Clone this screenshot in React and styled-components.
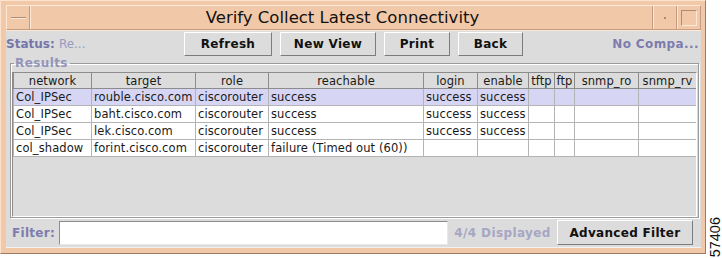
import React from "react";
import styled, { createGlobalStyle } from "styled-components";

const Global = createGlobalStyle`
  html, body { margin: 0; padding: 0; background: #ffffff; }
  body { font-family: "DejaVu Sans", sans-serif; }
`;

const UI = `"DejaVu Sans", "Liberation Sans", sans-serif`;

const Page = styled.div`
  display: flex;
  width: 722px;
  height: 258px;
`;

const Window = styled.div`
  box-sizing: border-box;
  width: 706px;
  height: 254px;
  background: #f2c9a8;
  border-right: 1px solid #9e7a64;
  border-bottom: 1px solid #9e7a64;
  border-left: 1px solid #fbe2cf;
  border-top: 1px solid #fbe2cf;
  padding: 4px 4px 5px 5px;
  display: flex;
  flex-direction: column;
`;

const TitleBar = styled.div`
  display: flex;
  height: 25px;
  box-sizing: border-box;
  border-top: 1px solid #fde8d8;
  border-bottom: 1px solid #c49c84;
  border-left: 1px solid #fde8d8;
  border-right: 1px solid #c49c84;
`;

const TitleCell = styled.div`
  display: flex;
  align-items: center;
  justify-content: center;
  width: ${(p) => p.$w}px;
  border-right: 1px solid ${(p) => (p.$last ? "transparent" : "#c49c84")};
  border-left: 1px solid ${(p) => (p.$first ? "transparent" : "#fde8d8")};
  box-sizing: border-box;
`;

const Title = styled.div`
  flex: 1;
  display: flex;
  align-items: center;
  justify-content: center;
  font-family: ${UI};
  font-size: 16.5px;
  color: #111;
  border-left: 1px solid #fde8d8;
  border-right: 1px solid #c49c84;
  padding-left: 2px;
`;

const Dash = styled.div`
  width: 15px;
  height: 1px;
  background: #b08c76;
  border-bottom: 1px solid #fde8d8;
`;

const Dot = styled.div`
  width: 2px;
  height: 2px;
  background: #b08c76;
`;

const MaxBox = styled.div`
  width: 14px;
  height: 14px;
  border: 1px solid;
  border-color: #b08c76 #fde8d8 #fde8d8 #b08c76;
`;

const Content = styled.div`
  flex: 1;
  background: #dcdcdc;
  display: flex;
  flex-direction: column;
  border-top: 1px solid #fde8d8;
`;

const Toolbar = styled.div`
  display: flex;
  align-items: center;
  height: 25px;
`;

const Status = styled.div`
  width: 178px;
  font-family: ${UI};
  font-size: 12px;
  font-weight: bold;
  color: #7676aa;
  white-space: nowrap;
`;

const Faint = styled.span`
  font-weight: normal;
  color: #9a9ac0;
`;

const Buttons = styled.div`
  display: flex;
  gap: 8px;
`;

const Button = styled.button`
  box-sizing: border-box;
  width: ${(p) => p.$w}px;
  height: ${(p) => p.$h || 24}px;
  background: #dcdcdc;
  border: 1px solid;
  border-color: #ffffff #7c7c7c #7c7c7c #ffffff;
  font-family: ${UI};
  font-size: 12px;
  font-weight: bold;
  color: #111;
  padding: 0;
  letter-spacing: 0.3px;
`;

const RightLabel = styled.div`
  margin-left: auto;
  padding-right: 2px;
  font-family: ${UI};
  font-size: 12px;
  font-weight: bold;
  color: #7c7cae;
  letter-spacing: 0.4px;
`;

const Group = styled.fieldset`
  margin: 1px 2px 0 4px;
  padding: 2px 1px 0 1px;
  border: 1px solid #9a9a9a;
  box-shadow: inset 1px 1px 0 #ffffff, 1px 1px 0 #ffffff;
  min-width: 0;
`;

const Legend = styled.legend`
  margin-left: 2px;
  padding: 0 2px 0 1px;
  font-family: ${UI};
  font-size: 12px;
  font-weight: bold;
  color: #9494ba;
  letter-spacing: 0.4px;
  line-height: 13px;
`;

const Scroll = styled.div`
  height: 143px;
  background: #dcdcdc;
  border: 1px solid #8c8c8c;
  border-right-color: #ffffff;
  border-bottom-color: #ffffff;
  overflow: hidden;
`;

const Table = styled.table`
  border-collapse: collapse;
  table-layout: fixed;
  width: 683px;
  font-family: ${UI};
  font-size: 11.5px;
  color: #1a1a1a;
  letter-spacing: 0.1px;
`;

const Th = styled.th`
  height: 15px;
  padding: 0;
  font-weight: normal;
  text-align: center;
  background: #dcdcdc;
  border: 1px solid #8c8c8c;
  border-top: none;
  white-space: nowrap;
  overflow: hidden;
  line-height: 14px;
`;

const Row = styled.tr`
  background: ${(p) => (p.$sel ? "#d6d6f4" : "#ffffff")};
`;

const Td = styled.td`
  height: 16px;
  padding: 0 0 0 2px;
  border: 1px solid #b4b4b4;
  white-space: nowrap;
  overflow: hidden;
  line-height: 15px;
`;

const FilterRow = styled.div`
  display: flex;
  align-items: center;
  height: 29px;
  padding-left: 6px;
  border-bottom: 1px solid #f2f2f2;
`;

const FilterLabel = styled.div`
  width: 47px;
  font-family: ${UI};
  font-size: 12px;
  font-weight: bold;
  color: #7c7cae;
  letter-spacing: 0.3px;
`;

const Input = styled.div`
  box-sizing: border-box;
  width: 389px;
  height: 24px;
  background: #ffffff;
  border: 1px solid;
  border-color: #8c8c8c #e8e8e8 #e8e8e8 #8c8c8c;
`;

const Count = styled.div`
  width: 109px;
  text-align: center;
  font-family: ${UI};
  font-size: 12px;
  font-weight: bold;
  color: #a6a6c4;
  letter-spacing: 0.4px;
`;

const Figure = styled.div`
  align-self: flex-end;
  margin-left: 3px;
  margin-bottom: 1px;
  writing-mode: vertical-rl;
  transform: rotate(180deg);
  font-family: "Liberation Sans", sans-serif;
  font-size: 14.5px;
  line-height: 13px;
  color: #111;
`;

const cols = [
  ["network", 78],
  ["target", 104],
  ["role", 73],
  ["reachable", 155],
  ["login", 54],
  ["enable", 51],
  ["tftp", 26],
  ["ftp", 20],
  ["snmp_ro", 64],
  ["snmp_rv", 58],
];

const rows = [
  ["Col_IPSec", "rouble.cisco.com", "ciscorouter", "success", "success", "success"],
  ["Col_IPSec", "baht.cisco.com", "ciscorouter", "success", "success", "success"],
  ["Col_IPSec", "lek.cisco.com", "ciscorouter", "success", "success", "success"],
  ["col_shadow", "forint.cisco.com", "ciscorouter", "failure (Timed out (60))", "", ""],
];

export default function App() {
  return (
    <>
      <Global />
      <Page>
        <Window>
          <TitleBar>
            <TitleCell $w={23} $first>
              <Dash />
            </TitleCell>
            <Title>Verify Collect Latest Connectivity</Title>
            <TitleCell $w={24}>
              <Dot />
            </TitleCell>
            <TitleCell $w={23} $last>
              <MaxBox />
            </TitleCell>
          </TitleBar>
          <Content>
            <Toolbar>
              <Status>
                Status: <Faint>Re...</Faint>
              </Status>
              <Buttons>
                <Button $w={88}>Refresh</Button>
                <Button $w={96}>New View</Button>
                <Button $w={66}>Print</Button>
                <Button $w={65}>Back</Button>
              </Buttons>
              <RightLabel>No Compa...</RightLabel>
            </Toolbar>
            <Group>
              <Legend>Results</Legend>
              <Scroll>
                <Table>
                  <colgroup>
                    {cols.map(([n, w]) => (
                      <col key={n} style={{ width: w }} />
                    ))}
                  </colgroup>
                  <thead>
                    <tr>
                      {cols.map(([n]) => (
                        <Th key={n}>{n}</Th>
                      ))}
                    </tr>
                  </thead>
                  <tbody>
                    {rows.map((r, i) => (
                      <Row key={i} $sel={i === 0}>
                        {cols.map((c, j) => (
                          <Td key={j}>{r[j] || ""}</Td>
                        ))}
                      </Row>
                    ))}
                  </tbody>
                </Table>
              </Scroll>
            </Group>
            <FilterRow>
              <FilterLabel>Filter:</FilterLabel>
              <Input />
              <Count>4/4 Displayed</Count>
              <Button $w={136} $h={25}>Advanced Filter</Button>
            </FilterRow>
          </Content>
        </Window>
        <Figure>57406</Figure>
      </Page>
    </>
  );
}
